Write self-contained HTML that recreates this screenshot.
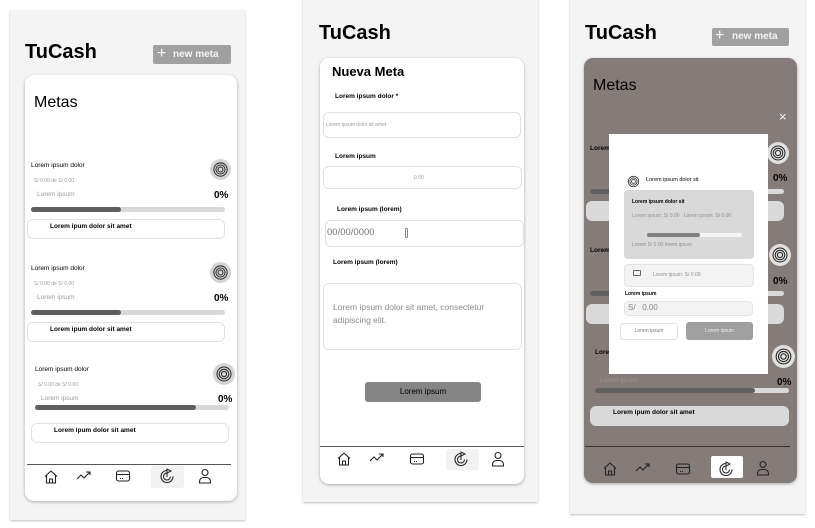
<!DOCTYPE html>
<html><head><meta charset="utf-8"><style>
*{margin:0;padding:0;box-sizing:border-box}
body{width:815px;height:528px;background:#fff;position:relative;overflow:hidden;font-family:"Liberation Sans",sans-serif;color:#000}
div,span,svg{position:absolute}
.t{white-space:nowrap;line-height:1}
.b{font-weight:bold}
.panel{background:#f4f4f4;box-shadow:0 1px 2px rgba(0,0,0,.25)}
.card{background:#fff;border-radius:9px;box-shadow:0 1px 3px rgba(0,0,0,.3)}
.g{color:#9a9a9a}
.bar{height:5px;border-radius:3px;background:#d9d9d9}
.bar i{position:absolute;left:0;top:0;height:5px;border-radius:3px;background:#5f5f5f}
.box{border:1px solid #e0e0e0;border-radius:6px;background:#fff}
.tgt{border-radius:50%;background:#d4d4d4}
</style></head><body>
<svg width="0" height="0" style="position:absolute"><defs>
<symbol id="tg" viewBox="0 0 20 20"><circle cx="10" cy="10" r="7" fill="none" stroke="#222" stroke-width="1"/><circle cx="10" cy="10" r="4.8" fill="none" stroke="#222" stroke-width="1"/><circle cx="10" cy="10" r="2.6" fill="none" stroke="#222" stroke-width="1"/></symbol>
<symbol id="home" viewBox="0 0 16 16"><path d="M2 7.5L8 2l6 5.5M3.5 6.5V14h9V6.5M6.5 14v-4h3v4" fill="none" stroke="#222" stroke-width="1.1" stroke-linejoin="round"/></symbol>
<symbol id="trend" viewBox="0 0 16 16"><path d="M1 11l4-4 3 3 6-6M10 4h4v3" fill="none" stroke="#222" stroke-width="1.1"/></symbol>
<symbol id="card" viewBox="0 0 16 16"><rect x="1.5" y="3" width="13" height="10" rx="2" fill="none" stroke="#222" stroke-width="1.1"/><path d="M1.5 6.5h13M5 10.5h1M7 10.5h1" stroke="#222" stroke-width="1"/></symbol>
<symbol id="goal" viewBox="0 0 16 16"><path d="M8 2.5A6 6 0 1 0 14 8.5" fill="none" stroke="#222" stroke-width="1.1"/><path d="M8 5A3.5 3.5 0 1 0 11.5 8.5" fill="none" stroke="#222" stroke-width="1"/><path d="M8 9V1l4 2-4 2" fill="none" stroke="#222" stroke-width="1"/></symbol>
<symbol id="user" viewBox="0 0 16 16"><circle cx="8" cy="4.5" r="3" fill="none" stroke="#222" stroke-width="1.1"/><path d="M2.5 15v-1.5a4 4 0 0 1 4-4h3a4 4 0 0 1 4 4V15z" fill="none" stroke="#222" stroke-width="1.1"/></symbol>
</defs></svg>

<!-- FRAME 1 -->
<div class="panel" style="left:10px;top:10px;width:235px;height:510px"></div>
<div class="t b" style="left:25px;top:42px;font-size:20px">TuCash</div>
<div style="left:153px;top:45px;width:78px;height:19px;background:#a0a0a0;border-radius:2px"></div>
<div class="t" style="left:157px;top:46px;font-size:16px;color:#fff">+</div>
<div class="t b" style="left:173px;top:50px;font-size:10px;color:#f4f4f4">new meta</div>
<div class="card" style="left:25px;top:75px;width:212px;height:426px"></div>
<div class="t" style="left:34px;top:95px;font-size:16px;font-weight:500">Metas</div>

<div class="t" style="left:31px;top:163px;font-size:6.5px">Lorem ipsum dolor</div>
<div class="tgt" style="left:210px;top:159px;width:21px;height:21px"><svg style="left:1px;top:1px" width="19" height="19"><use href="#tg"/></svg></div>
<div class="t g" style="left:34px;top:179px;font-size:5px">S/ 0.00 de S/ 0.00</div>
<div class="t g" style="left:37px;top:192px;font-size:6.5px">Lorem ipsum</div>
<div class="t b" style="left:214px;top:191px;font-size:10px">0%</div>
<div class="bar" style="left:31px;top:207px;width:194px"><i style="width:90px"></i></div>
<div class="box" style="left:27px;top:219px;width:198px;height:20px"></div>
<div class="t b" style="left:50px;top:224px;font-size:6.5px">Lorem ipum dolor sit amet</div>

<div class="t" style="left:31px;top:266px;font-size:6.5px">Lorem ipsum dolor</div>
<div class="tgt" style="left:210px;top:262px;width:21px;height:21px"><svg style="left:1px;top:1px" width="19" height="19"><use href="#tg"/></svg></div>
<div class="t g" style="left:34px;top:282px;font-size:5px">S/ 0.00 de S/ 0.00</div>
<div class="t g" style="left:37px;top:295px;font-size:6.5px">Lorem ipsum</div>
<div class="t b" style="left:214px;top:294px;font-size:10px">0%</div>
<div class="bar" style="left:31px;top:310px;width:194px"><i style="width:90px"></i></div>
<div class="box" style="left:27px;top:322px;width:198px;height:20px"></div>
<div class="t b" style="left:50px;top:327px;font-size:6.5px">Lorem ipum dolor sit amet</div>

<div class="t" style="left:35px;top:367px;font-size:6.5px">Lorem ipsum dolor</div>
<div class="tgt" style="left:213px;top:363px;width:22px;height:22px"><svg style="left:1px;top:1px" width="20" height="20"><use href="#tg"/></svg></div>
<div class="t g" style="left:38px;top:383px;font-size:5px">S/ 0.00 de S/ 0.00</div>
<div class="t g" style="left:41px;top:396px;font-size:6.5px">Lorem ipsum</div>
<div class="t b" style="left:218px;top:395px;font-size:10px">0%</div>
<div class="bar" style="left:35px;top:405px;width:194px"><i style="width:161px"></i></div>
<div class="box" style="left:31px;top:423px;width:198px;height:20px"></div>
<div class="t b" style="left:54px;top:428px;font-size:6.5px">Lorem ipum dolor sit amet</div>

<div style="left:27px;top:464px;width:204px;height:1px;background:#555"></div>
<div style="left:151px;top:466px;width:33px;height:22px;background:#f2f2f2;border-radius:3px"></div>
<svg style="left:43px;top:469px" width="16" height="16"><use href="#home"/></svg>
<svg style="left:76px;top:468px" width="16" height="16"><use href="#trend"/></svg>
<svg style="left:115px;top:468px" width="16" height="16"><use href="#card"/></svg>
<svg style="left:159px;top:468px" width="16" height="16"><use href="#goal"/></svg>
<svg style="left:197px;top:468px" width="16" height="16"><use href="#user"/></svg>

<!-- FRAME 2 -->
<div class="panel" style="left:303px;top:-2px;width:235px;height:504px"></div>
<div class="t b" style="left:319px;top:23px;font-size:20px">TuCash</div>
<div class="card" style="left:320px;top:58px;width:204px;height:426px"></div>
<div class="t b" style="left:332px;top:65px;font-size:13px">Nueva Meta</div>
<div class="t b" style="left:335px;top:94px;font-size:6.5px">Lorem ipsum dolor *</div>
<div class="box" style="left:323px;top:112px;width:198px;height:26px"></div>
<div class="t g" style="left:326px;top:123px;font-size:5px">Lorem ipsum dolor sit amet</div>
<div class="t b" style="left:335px;top:154px;font-size:6.5px">Lorem ipsum</div>
<div class="box" style="left:323px;top:166px;width:199px;height:23px"></div>
<div class="t g" style="left:414px;top:176px;font-size:5px">0.00</div>
<div class="t b" style="left:337px;top:207px;font-size:6.5px">Lorem ipsum (lorem)</div>
<div class="box" style="left:325px;top:220px;width:199px;height:27px"></div>
<div class="t" style="left:327px;top:228px;font-size:9.5px;color:#777">00/00/0000</div>
<div style="left:405px;top:228px;width:3px;height:10px;border:1px solid #888;border-radius:1px"></div>
<div class="t b" style="left:333px;top:260px;font-size:6.5px">Lorem ipsum (lorem)</div>
<div class="box" style="left:323px;top:283px;width:199px;height:67px"></div>
<div class="t" style="left:333px;top:301px;font-size:8.5px;color:#8a8a8a;line-height:13px">Lorem ipsum dolor sit amet, consectetur<br>adipiscing elit.</div>
<div style="left:365px;top:382px;width:116px;height:20px;background:#858585;border-radius:3px"></div>
<div class="t" style="left:365px;top:388px;width:116px;text-align:center;font-size:8px">Lorem ipsum</div>
<div style="left:320px;top:446px;width:204px;height:1px;background:#555"></div>
<div style="left:446px;top:449px;width:33px;height:21px;background:#f2f2f2;border-radius:3px"></div>
<svg style="left:336px;top:451px" width="16" height="16"><use href="#home"/></svg>
<svg style="left:369px;top:450px" width="16" height="16"><use href="#trend"/></svg>
<svg style="left:409px;top:451px" width="16" height="16"><use href="#card"/></svg>
<svg style="left:453px;top:451px" width="16" height="16"><use href="#goal"/></svg>
<svg style="left:490px;top:451px" width="16" height="16"><use href="#user"/></svg>

<!-- FRAME 3 -->
<div class="panel" style="left:570px;top:-2px;width:235px;height:516px"></div>
<div class="t b" style="left:585px;top:23px;font-size:20px">TuCash</div>
<div style="left:712px;top:28px;width:77px;height:18px;background:#a0a0a0;border-radius:2px"></div>
<div class="t" style="left:715px;top:28px;font-size:16px;color:#fff">+</div>
<div class="t b" style="left:732px;top:32px;font-size:10px;color:#f4f4f4">new meta</div>
<div style="left:584px;top:58px;width:213px;height:425px;background:#857c79;border-radius:9px;box-shadow:0 1px 3px rgba(0,0,0,.3)"></div>
<div class="t" style="left:593px;top:78px;font-size:16px;font-weight:500">Metas</div>
<div class="t" style="left:779px;top:110px;font-size:13px;color:#fff">×</div>

<div class="t b" style="left:590px;top:146px;font-size:6.5px">Lorem</div>
<div class="tgt" style="left:767px;top:142px;width:22px;height:22px;background:#e0e0e0"><svg style="left:1px;top:1px" width="20" height="20"><use href="#tg"/></svg></div>
<div class="t b" style="left:773px;top:174px;font-size:10px">0%</div>
<div class="bar" style="left:590px;top:189px;width:194px"><i style="width:30px"></i></div>
<div style="left:586px;top:201px;width:198px;height:20px;background:#d9d9d9;border-radius:6px"></div>
<div class="t b" style="left:590px;top:248px;font-size:6.5px">Lorem</div>
<div class="tgt" style="left:769px;top:244px;width:22px;height:22px;background:#e0e0e0"><svg style="left:1px;top:1px" width="20" height="20"><use href="#tg"/></svg></div>
<div class="t b" style="left:773px;top:277px;font-size:10px">0%</div>
<div class="bar" style="left:590px;top:291px;width:194px"><i style="width:30px"></i></div>
<div style="left:586px;top:304px;width:198px;height:20px;background:#d9d9d9;border-radius:6px"></div>
<div class="t b" style="left:595px;top:350px;font-size:6.5px">Lore</div>
<div class="tgt" style="left:772px;top:345px;width:23px;height:23px;background:#e0e0e0"><svg style="left:1px;top:1px" width="21" height="21"><use href="#tg"/></svg></div>
<div class="t" style="left:600px;top:378px;font-size:6.5px;color:#9c9390">Lorem ipsum</div>
<div class="t b" style="left:777px;top:378px;font-size:10px">0%</div>
<div class="bar" style="left:595px;top:388px;width:194px"><i style="width:160px"></i></div>
<div style="left:590px;top:406px;width:199px;height:20px;background:#d9d9d9;border-radius:6px"></div>
<div class="t b" style="left:613px;top:410px;font-size:6.5px">Lorem ipum dolor sit amet</div>

<div style="left:609px;top:134px;width:159px;height:240px;background:#fff"></div>
<svg style="left:626px;top:174px" width="15" height="15"><use href="#tg"/></svg>
<div class="t" style="left:646px;top:178px;font-size:5.5px">Lorem ipsum dolor sit</div>
<div style="left:624px;top:190px;width:130px;height:69px;background:#d9d9d9;border-radius:4px"></div>
<div class="t b" style="left:632px;top:200px;font-size:5px">Lorem ipsum dolor sit</div>
<div class="t g" style="left:632px;top:214px;font-size:5px;color:#8f8f8f">Lorem ipsum: S/ 0.00 &nbsp;&nbsp;Lorem ipsum: S/ 0.00</div>
<div style="left:647px;top:233px;width:95px;height:4px;background:#f4f4f4;border-radius:2px"></div>
<div style="left:647px;top:233px;width:53px;height:4px;background:#808080;border-radius:2px"></div>
<div class="t" style="left:632px;top:243px;font-size:5px;color:#8f8f8f">Lorem S/ 0.00 lorem ipsum</div>
<div style="left:624px;top:264px;width:130px;height:23px;background:#f3f3f3;border:1px solid #e4e4e4;border-radius:4px"></div>
<div style="left:633px;top:270px;width:8px;height:6px;border:1px solid #666;border-radius:1px"></div>
<div class="t" style="left:653px;top:273px;font-size:5px;color:#8f8f8f">Lorem ipsum: S/ 0.00</div>
<div class="t b" style="left:625px;top:292px;font-size:5px">Lorem ipsum</div>
<div style="left:624px;top:301px;width:129px;height:15px;background:#f3f3f3;border:1px solid #e4e4e4;border-radius:4px"></div>
<div class="t" style="left:628px;top:304px;font-size:8px;color:#888">S/ &nbsp;&nbsp;0.00</div>
<div style="left:620px;top:323px;width:58px;height:17px;border:1px solid #e0e0e0;border-radius:3px;background:#fff"></div>
<div class="t" style="left:620px;top:329px;width:58px;text-align:center;font-size:5px;color:#777">Lorem ipsum</div>
<div style="left:686px;top:322px;width:67px;height:18px;background:#a0a0a0;border-radius:3px"></div>
<div class="t" style="left:686px;top:329px;width:67px;text-align:center;font-size:5px;color:#eee">Lorem ipsum</div>

<div style="left:585px;top:446px;width:205px;height:1px;background:#333"></div>
<div style="left:711px;top:456px;width:32px;height:22px;background:#fff;border-radius:2px"></div>
<svg style="left:602px;top:461px" width="16" height="16"><use href="#home"/></svg>
<svg style="left:635px;top:460px" width="16" height="16"><use href="#trend"/></svg>
<svg style="left:675px;top:461px" width="16" height="16"><use href="#card"/></svg>
<svg style="left:718px;top:461px" width="16" height="16"><use href="#goal"/></svg>
<svg style="left:755px;top:460px" width="16" height="16"><use href="#user"/></svg>
</body></html>
